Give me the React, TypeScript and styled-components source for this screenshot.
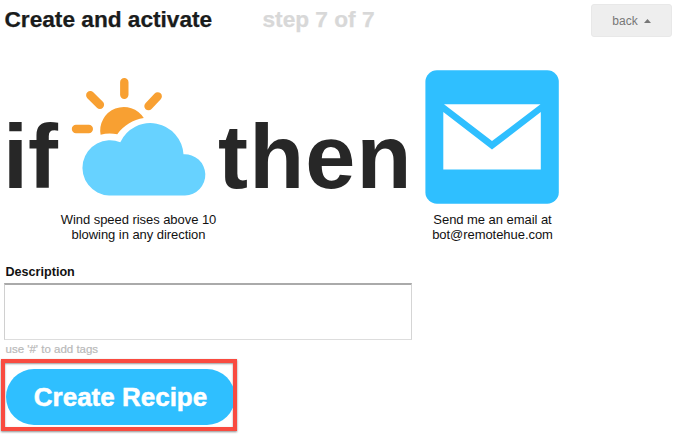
import React from "react";
import styled, { createGlobalStyle } from "styled-components";

const GlobalStyle = createGlobalStyle`
  * { box-sizing: border-box; }
  body {
    margin: 0;
    background: #fff;
    font-family: "Liberation Sans", Arial, sans-serif;
    overflow: hidden;
  }
`;

const Page = styled.main`
  width: 675px;
  height: 436px;
  display: flex;
  flex-direction: column;
  align-items: flex-start;
  overflow: hidden;
`;

const Header = styled.header`
  display: flex;
  align-items: flex-start;
  width: 100%;
  height: 70px;
  padding: 4px 3px 0 4.5px;
`;

const Heading = styled.h1<{ $muted?: boolean }>`
  margin: 2px 0 0;
  width: ${(p) => (p.$muted ? "auto" : "258px")};
  flex: none;
  font-size: 22.7px;
  line-height: 26px;
  font-weight: bold;
  letter-spacing: -0.02px;
  white-space: nowrap;
  color: ${(p) => (p.$muted ? "#d8d8d8" : "#1a1c1c")};
  -webkit-text-stroke: 0.25px currentColor;
`;

const BackButton = styled.button`
  display: flex;
  align-items: center;
  justify-content: center;
  gap: 6px;
  width: 81px;
  height: 33px;
  margin-left: auto;
  padding: 0;
  border: 1px solid #e8e8e8;
  border-radius: 3px;
  background: #eee;
  color: #777;
  font: 12px "Liberation Sans", Arial, sans-serif;
`;

const Recipe = styled.section`
  display: grid;
  grid-template-columns: 58px 160px 207px 134px;
  height: 192px;
`;

const Word = styled.div<{ $inset: number; $tracking?: number }>`
  padding: 35px 0 0 ${(p) => p.$inset}px;
  font-size: 90px;
  line-height: 104px;
  font-weight: bold;
  letter-spacing: ${(p) => p.$tracking ?? 0}px;
  color: #272727;
  white-space: nowrap;
`;

const Channel = styled.figure`
  display: flex;
  flex-direction: column;
  align-items: center;
  margin: 0;
`;

const Caption = styled.figcaption`
  margin-top: 8px;
  padding-left: 1px;
  font-size: 13px;
  line-height: 15px;
  letter-spacing: -0.05px;
  text-align: center;
  white-space: nowrap;
  color: #111;
`;

const Form = styled.form`
  display: flex;
  flex-direction: column;
  align-items: flex-start;
`;

const Label = styled.label`
  margin: 3px 0 0 5.5px;
  font-size: 12.6px;
  line-height: 14px;
  height: 18px;
  font-weight: bold;
  color: #111;
`;

const Description = styled.textarea`
  display: block;
  width: 408px;
  height: 57px;
  margin-left: 4px;
  border: 1px solid #d0d0d0;
  border-top: 2px solid #aaa;
  border-right: 1px solid #d5d5d5;
  border-bottom-color: #ddd;
  background: #fff;
  resize: none;
  outline: none;
`;

const Hint = styled.small`
  height: 19px;
  padding: 2px 0 0 5.5px;
  font-size: 11.5px;
  line-height: 14px;
  color: #b9b9b9;
  -webkit-text-stroke: 0.2px #b9b9b9;
`;

const Highlight = styled.div`
  width: 236px;
  height: 72px;
  margin-left: 1px;
  border: 4px solid #f94b40;
  padding: 6px 0 0 1px;
  overflow: hidden;
  box-shadow: 0 1px 2px rgba(0, 0, 0, 0.45), inset 0 1px 2px rgba(0, 0, 0, 0.4);
`;

const CreateButton = styled.button`
  display: block;
  width: 229px;
  height: 56px;
  padding: 0;
  border: 0;
  border-radius: 28px;
  background: #2fbfff;
  color: #fff;
  font: bold 26px "Liberation Sans", Arial, sans-serif;
  -webkit-text-stroke: 0.5px #fff;
`;

const WeatherIcon = () => (
  <svg width="134" height="134" viewBox="71 70 134 134" overflow="visible" aria-hidden="true">
    <g stroke="#f8a032" strokeWidth="8.4" strokeLinecap="round">
      <path d="M124.300 82.200v12.600M90.300 95.200l9.600 9.600M157.700 96.400l-9.200 9.700M76 129h12.800" />
    </g>
    <path fill="#f8a032" d="M100.600 134.700A23.600 23.600 0 0 1 143.800 118C133 119.500 123.500 125.500 117.300 134.200Q108.500 132.500 100.600 134.700Z" />
    <path fill="#67d2ff" d="M109 195.400A27.600 27.600 0 1 1 120.300 142.200A33.200 33.200 0 0 1 183.500 154.300A20.570 20.570 0 1 1 185 195.400Z" />
  </svg>
);

const EmailIcon = () => (
  <svg width="134" height="134" viewBox="425 70 134 134" aria-hidden="true">
    <rect x="425.400" y="70.300" width="133.400" height="133.400" rx="11.500" fill="#2fbfff" />
    <path fill="#fff" d="M444 104.300H540.500L492 141ZM443.300 112L492 149.500L540.800 112V169.500H443.300Z" />
  </svg>
);

const Caret = () => (
  <svg width="7" height="4" viewBox="0 0 7 4" aria-hidden="true">
    <path d="M0 4L3.500 0L7 4Z" fill="#777" />
  </svg>
);

export default function App() {
  return (
    <>
      <GlobalStyle />
      <Page>
        <Header>
          <Heading>Create and activate</Heading>
          <Heading as="h2" $muted>step 7 of 7</Heading>
          <BackButton type="button">back <Caret /></BackButton>
        </Header>
        <Recipe>
          <Word $inset={3}>if</Word>
          <Channel>
            <WeatherIcon />
            <Caption>Wind speed rises above 10<br />blowing in any direction</Caption>
          </Channel>
          <Word $inset={0} $tracking={1.2}>then</Word>
          <Channel>
            <EmailIcon />
            <Caption>Send me an email at<br />bot@remotehue.com</Caption>
          </Channel>
        </Recipe>
        <Form>
          <Label htmlFor="description">Description</Label>
          <Description id="description" />
          <Hint>use '#' to add tags</Hint>
          <Highlight>
            <CreateButton type="button">Create Recipe</CreateButton>
          </Highlight>
        </Form>
      </Page>
    </>
  );
}
